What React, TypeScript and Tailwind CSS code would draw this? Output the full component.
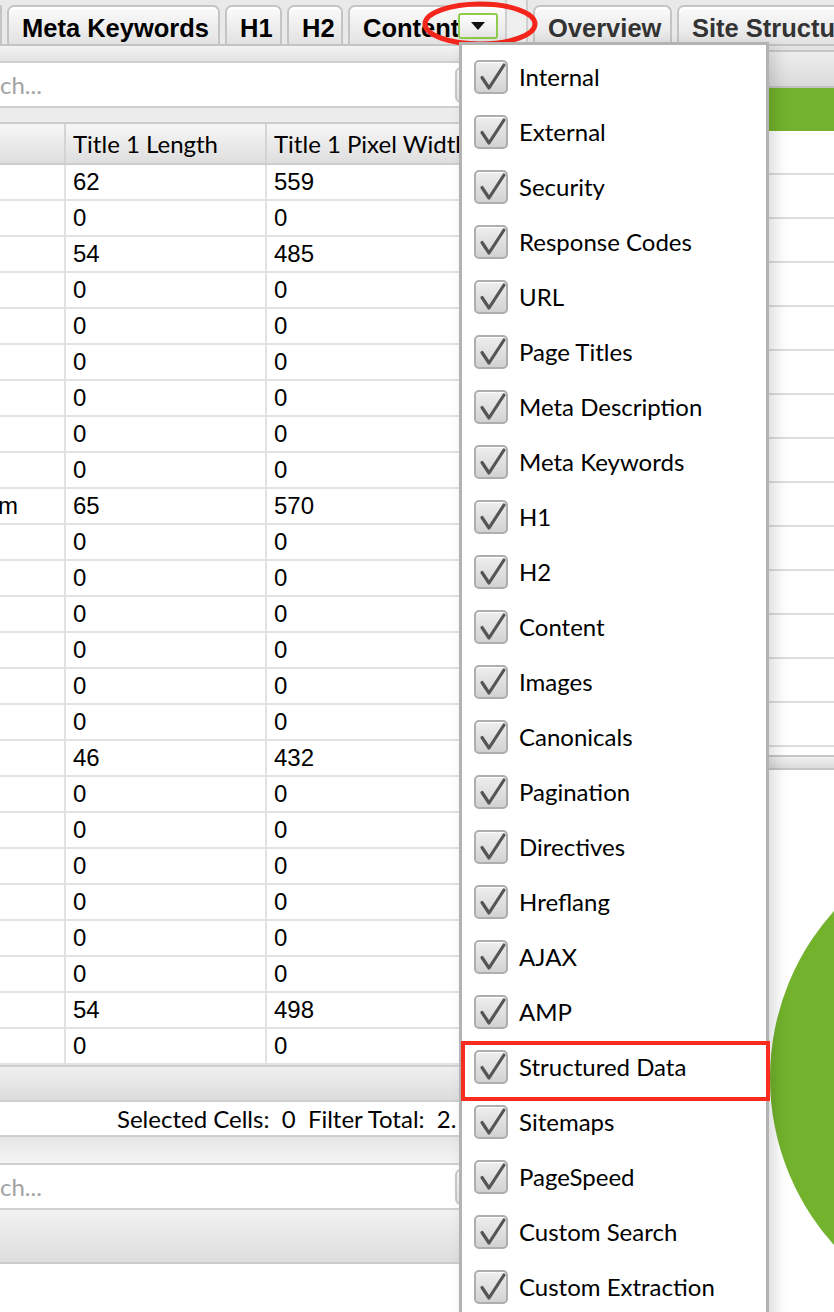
import React from "react";

const rows: [string, string, string][] = [
  ["", "62", "559"],
  ["", "0", "0"],
  ["", "54", "485"],
  ["", "0", "0"],
  ["", "0", "0"],
  ["", "0", "0"],
  ["", "0", "0"],
  ["", "0", "0"],
  ["", "0", "0"],
  ["m", "65", "570"],
  ["", "0", "0"],
  ["", "0", "0"],
  ["", "0", "0"],
  ["", "0", "0"],
  ["", "0", "0"],
  ["", "0", "0"],
  ["", "46", "432"],
  ["", "0", "0"],
  ["", "0", "0"],
  ["", "0", "0"],
  ["", "0", "0"],
  ["", "0", "0"],
  ["", "0", "0"],
  ["", "54", "498"],
  ["", "0", "0"],
];

const menuItems = [
  "Internal",
  "External",
  "Security",
  "Response Codes",
  "URL",
  "Page Titles",
  "Meta Description",
  "Meta Keywords",
  "H1",
  "H2",
  "Content",
  "Images",
  "Canonicals",
  "Pagination",
  "Directives",
  "Hreflang",
  "AJAX",
  "AMP",
  "Structured Data",
  "Sitemaps",
  "PageSpeed",
  "Custom Search",
  "Custom Extraction",
];

const Tab = ({ label, className = "" }: { label: string; className?: string }) => (
  <div
    className={`h-[41px] mt-[5px] pt-[4px] shrink-0 flex items-center px-[13px] rounded-t-[7px] border-2 border-b-0 border-[#c4c4c4] bg-gradient-to-b from-[#fbfbfb] to-[#e1e1e1] shadow-[inset_0_2px_0_#ffffff] font-['Liberation_Sans',Arial,sans-serif] font-bold text-[25.5px] leading-none whitespace-nowrap ${className}`}
  >
    {label}
  </div>
);

const CheckBox = () => (
  <div className="relative w-[34px] h-[34px] shrink-0 rounded-[5px] border-2 border-[#aeaeae] bg-gradient-to-b from-[#eeeeee] to-[#d2d2d2] shadow-[inset_0_1px_0_#ffffff]">
    <svg className="absolute -left-[2px] -top-[2px]" width="34" height="34" viewBox="0 0 34 34">
      <path
        d="M8 17.5 L15 28 L30 5"
        fill="none"
        stroke="#555555"
        strokeWidth="3.2"
        strokeLinecap="round"
        strokeLinejoin="round"
      />
    </svg>
  </div>
);

const SearchRow = () => (
  <div className="h-[47px] shrink-0 flex items-center bg-white border-y-2 border-[#cfcfcf]">
    <div className="flex-1 text-[24px] text-[#a3a3a3] font-['Lato',sans-serif] leading-none">ch...</div>
    <div className="w-[44px] h-[36px] mr-[6px] rounded-[6px] border-2 border-[#c8c8c8] bg-gradient-to-b from-[#fafafa] to-[#e4e4e4]" />
  </div>
);

export default function App() {
  return (
    <div className="relative w-[834px] h-[1312px] overflow-hidden bg-[#ebebeb] flex font-['Lato',sans-serif] text-black">
      {/* left panel */}
      <div className="w-[505px] shrink-0 flex flex-col bg-white">
        <div className="h-[46px] shrink-0 flex gap-[5px] bg-[#e9e9e9] border-b-2 border-[#c4c4c4] overflow-hidden">
          <div className="h-[41px] mt-[5px] w-[2px] shrink-0 rounded-tr-[4px] border-2 border-l-0 border-b-0 border-[#c4c4c4] bg-gradient-to-b from-[#fbfbfb] to-[#e1e1e1]" />
          <Tab label="Meta Keywords" className="w-[213px]" />
          <Tab label="H1" className="w-[57px]" />
          <Tab label="H2" className="w-[56px]" />
          <Tab label="Content" className="w-[160px]" />
        </div>
        <div className="h-[15px] shrink-0 bg-gradient-to-b from-[#f3f3f3] to-[#e3e3e3]" />
        <SearchRow />
        <div className="h-[14px] shrink-0 bg-[#ececec]" />
        {/* table header */}
        <div className="h-[43px] shrink-0 flex border-y-2 border-[#cdcdcd] bg-gradient-to-b from-[#f7f7f7] to-[#dedede] text-[24px] leading-none">
          <div className="w-[66px] shrink-0 border-r-2 border-[#d4d4d4]" />
          <div className="w-[201px] shrink-0 border-r-2 border-[#d4d4d4] flex items-center pl-[7px] whitespace-nowrap">
            Title 1 Length
          </div>
          <div className="flex-1 flex items-center pl-[7px] whitespace-nowrap overflow-hidden">Title 1 Pixel Width</div>
        </div>
        {/* table body */}
        <div className="shrink-0 flex flex-col font-['Liberation_Sans',Arial,sans-serif] text-[24px] leading-none">
          {rows.map((r, i) => (
            <div key={i} className="h-[36px] flex border-b-2 border-[#e2e2e2]">
              <div className="w-[66px] shrink-0 border-r-2 border-[#e2e2e2] flex items-center overflow-hidden">
                <span className="-ml-[2px]">{r[0]}</span>
              </div>
              <div className="w-[201px] shrink-0 border-r-2 border-[#e2e2e2] flex items-center pl-[7px]">{r[1]}</div>
              <div className="flex-1 flex items-center pl-[7px]">{r[2]}</div>
            </div>
          ))}
        </div>
        {/* horizontal scrollbar */}
        <div className="h-[35px] shrink-0 border-t-2 border-[#cfcfcf] bg-gradient-to-b from-[#f0f0f0] to-[#dcdcdc]" />
        {/* status bar */}
        <div className="h-[37px] shrink-0 bg-white border-y-2 border-[#cfcfcf] flex items-center pl-[117px] text-[24px] whitespace-nowrap overflow-hidden leading-none">
          Selected Cells:&nbsp;&nbsp;0&nbsp;&nbsp;Filter Total:&nbsp;&nbsp;2.
        </div>
        <div className="h-[26px] shrink-0 bg-gradient-to-b from-[#e6e6e6] to-[#f4f4f4]" />
        <SearchRow />
        <div className="h-[54px] shrink-0 bg-gradient-to-b from-[#f2f2f2] to-[#dddddd] border-b-2 border-[#cbcbcb]" />
        <div className="flex-1 bg-white" />
      </div>

      {/* split divider */}
      <div className="w-[23px] shrink-0 flex flex-col">
        <div className="h-[46px] border-x-2 border-[#cfcfcf] bg-[#efefef]" />
        <div className="flex-1 bg-[#e8e8e8]" />
      </div>

      {/* right panel */}
      <div className="flex-1 flex flex-col bg-white min-w-0">
        <div className="h-[46px] shrink-0 flex gap-[5px] pl-[5px] bg-[#e9e9e9] border-b-2 border-[#c4c4c4] overflow-hidden text-[#333333]">
          <Tab label="Overview" className="w-[139px]" />
          <Tab label="Site Structure" className="w-[200px]" />
        </div>
        <div className="h-[6px] shrink-0 bg-[#e2e2e2] border-b-2 border-[#c6c6c6]" />
        <div className="h-[36px] shrink-0 bg-gradient-to-b from-[#ededed] to-[#dadada] border-b-2 border-[#c2c2c2]" />
        <div className="h-[43px] shrink-0 bg-[#72b22c]" />
        {Array.from({ length: 14 }).map((_, i) => (
          <div key={i} className="h-[44px] shrink-0 border-b-2 border-[#dddddd]" />
        ))}
        <div className="h-[8px] shrink-0" />
        <div className="h-[15px] shrink-0 border-y-2 border-[#c6c6c6] bg-gradient-to-b from-[#f0f0f0] to-[#dcdcdc]" />
        <div className="relative flex-1 overflow-hidden">
          <svg className="absolute left-0 top-0" width="306" height="560" viewBox="0 0 306 560">
            <circle cx="492" cy="308" r="250" fill="#72b22c" />
          </svg>
        </div>
      </div>

      {/* dropdown trigger button */}
      <div className="absolute left-[458px] top-[13px] w-[40px] h-[26px] rounded-[3px] border-2 border-[#8fcb4c] bg-gradient-to-b from-[#ffffff] to-[#e6e6e6] flex items-center justify-center">
        <svg width="16" height="10" viewBox="0 0 16 10">
          <path d="M1 1 L15 1 L8 9 Z" fill="#111111" />
        </svg>
      </div>

      {/* red ellipse annotation */}
      <svg className="absolute left-[418px] top-0" width="124" height="50" viewBox="0 0 124 50">
        <ellipse cx="62" cy="24" rx="55" ry="20" fill="none" stroke="#f4261b" strokeWidth="5" />
      </svg>

      {/* dropdown menu */}
      <div className="absolute left-[459px] top-[42px] w-[310px] h-[1290px] bg-white border-[3px] border-[#b3b3b3] shadow-[6px_4px_14px_rgba(0,0,0,0.14)] pt-[4px] flex flex-col">
        {menuItems.map((item) => (
          <div key={item} className="h-[55px] shrink-0 flex items-center pl-[12px] gap-[11px]">
            <CheckBox />
            <span className="text-[24px] leading-none whitespace-nowrap">{item}</span>
          </div>
        ))}
      </div>

      {/* red box annotation */}
      <div className="absolute left-[461px] top-[1041px] w-[309px] h-[60px] border-4 border-[#fb2b1e]" />
    </div>
  );
}
